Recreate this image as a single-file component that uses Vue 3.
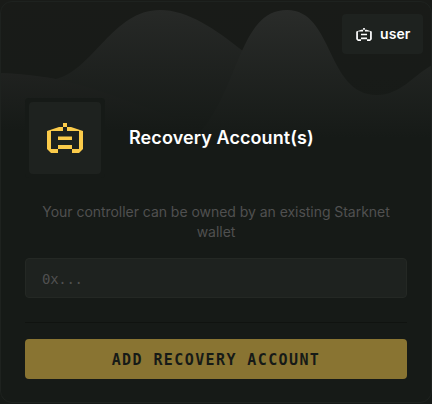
<script setup>
import { ref } from 'vue'

const username = 'user'
const address = ref('')
const robotPath =
  'M16 0h4v4h-4zM16 4v4H4v18h7v4H4L0 26V8L12 4zM20 4v4h12v18h-7v4h7l4-4V8L24 4zM11 13.5h14V17H11zM11 22h14v4H11z'
</script>

<template>
  <main class="card">
    <svg class="waves" viewBox="0 0 432 150" preserveAspectRatio="none" aria-hidden="true">
      <defs>
        <linearGradient id="crest" gradientUnits="userSpaceOnUse" x1="0" y1="8" x2="0" y2="138">
          <stop offset="0" stop-color="#2a2c2a" />
          <stop offset="1" stop-color="#161a17" />
        </linearGradient>
        <linearGradient id="hill" gradientUnits="userSpaceOnUse" x1="0" y1="8" x2="0" y2="130">
          <stop offset="0" stop-color="#272927" />
          <stop offset="1" stop-color="#161a17" />
        </linearGradient>
        <linearGradient id="shore" gradientUnits="userSpaceOnUse" x1="0" y1="70" x2="0" y2="130">
          <stop offset="0" stop-color="#202220" />
          <stop offset="1" stop-color="#161a17" />
        </linearGradient>
        <linearGradient id="sky" x1="0" y1="0" x2="0" y2="1">
          <stop offset="0" stop-color="#191b18" />
          <stop offset="0.5" stop-color="#181b18" />
          <stop offset="1" stop-color="#161a17" />
        </linearGradient>
      </defs>
      <rect width="432" height="150" fill="url(#sky)" />
      <path d="M0 73C20 74 38 77 56 79C93 70 113 10 160 10C188 10 215 29 243 51L260 150H0Z" fill="url(#hill)" />
      <path d="M0 73C60 75 90 87 154 110L200 130V150H0Z" fill="url(#shore)" />
      <path d="M195 138C240 92 238 10 287 10C334 10 326 95 377 95C400 95 413 76 432 65V150H195Z" fill="url(#crest)" />
    </svg>

    <div class="account">
      <svg class="account-icon" viewBox="0 0 36 30" aria-hidden="true">
        <path :d="robotPath" />
      </svg>
      <span>{{ username }}</span>
    </div>

    <header class="heading">
      <div class="emblem">
        <div class="emblem-tile">
          <svg viewBox="0 0 36 30" aria-hidden="true">
            <path :d="robotPath" />
          </svg>
        </div>
      </div>
      <h1>Recovery Account(s)</h1>
    </header>

    <p>Your controller can be owned by an existing Starknet wallet</p>
    <input v-model="address" type="text" placeholder="0x..." aria-label="Wallet address" />
    <hr />
    <button type="button">ADD RECOVERY ACCOUNT</button>
  </main>
</template>

<style>
body {
  margin: 0;
  background: #161a17;
}
</style>

<style scoped>
* {
  box-sizing: border-box;
}

.card {
  position: relative;
  display: flex;
  flex-direction: column;
  width: 432px;
  height: 404px;
  padding: 98px 25px 25px;
  overflow: hidden;
  background: #161a17;
  color: #fff;
  font-family: Inter, sans-serif;
}

.card::after {
  content: '';
  position: absolute;
  inset: 1px 0 1px 0;
  border: 1px solid #1e221f;
  border-radius: 12px;
  pointer-events: none;
}

.waves {
  position: absolute;
  top: 0;
  left: 0;
  width: 432px;
  height: 150px;
}

.account {
  position: absolute;
  top: 14px;
  right: 9px;
  display: flex;
  align-items: center;
  gap: 8px;
  width: 81px;
  height: 40px;
  padding-left: 14px;
  border-radius: 4px;
  background: #1e221f;
  font-size: 14px;
  font-weight: 600;
  letter-spacing: 0.1px;
}

.account span {
  padding-bottom: 1px;
  line-height: 20px;
}

.account-icon {
  width: 16px;
  height: 13px;
  fill: #fff;
}

.heading {
  position: relative;
  display: flex;
  align-items: center;
  gap: 24px;
  height: 80px;
}

.emblem {
  width: 80px;
  height: 80px;
  padding: 4px;
  border-radius: 4px;
  background: #161a17;
}

.emblem-tile {
  display: flex;
  align-items: center;
  justify-content: center;
  width: 72px;
  height: 72px;
  border-radius: 4px;
  background: #1e221f;
}

.emblem svg {
  width: 36px;
  height: 30px;
  fill: #fbcb4a;
}

h1 {
  margin: 0;
  font-size: 18px;
  font-weight: 600;
  letter-spacing: 0.09px;
  line-height: 24px;
}

p {
  margin: 24px 0 0;
  padding: 0 16px;
  color: #505050;
  font-size: 14px;
  letter-spacing: -0.04px;
  line-height: 20px;
  text-align: center;
}

input {
  flex: none;
  width: 100%;
  height: 40px;
  margin: 16px 0 0;
  padding: 1px 16px 0;
  border: 1px solid #242824;
  border-radius: 4px;
  outline: none;
  background: #1e221f;
  color: #fff;
  font-family: "DejaVu Sans Mono", monospace;
  font-size: 14px;
  letter-spacing: -0.3px;
}

input::placeholder {
  color: #505050;
  opacity: 1;
}

hr {
  width: 100%;
  height: 1px;
  margin: 24px 0 16px;
  border: 0;
  background: #101310;
}

button {
  flex: none;
  height: 40px;
  padding: 1px 0 0;
  border: 0;
  border-radius: 4px;
  background: #897432;
  color: #161a17;
  font-family: "DejaVu Sans Mono", monospace;
  font-size: 15px;
  font-weight: 700;
  letter-spacing: 1.4px;
}
</style>
